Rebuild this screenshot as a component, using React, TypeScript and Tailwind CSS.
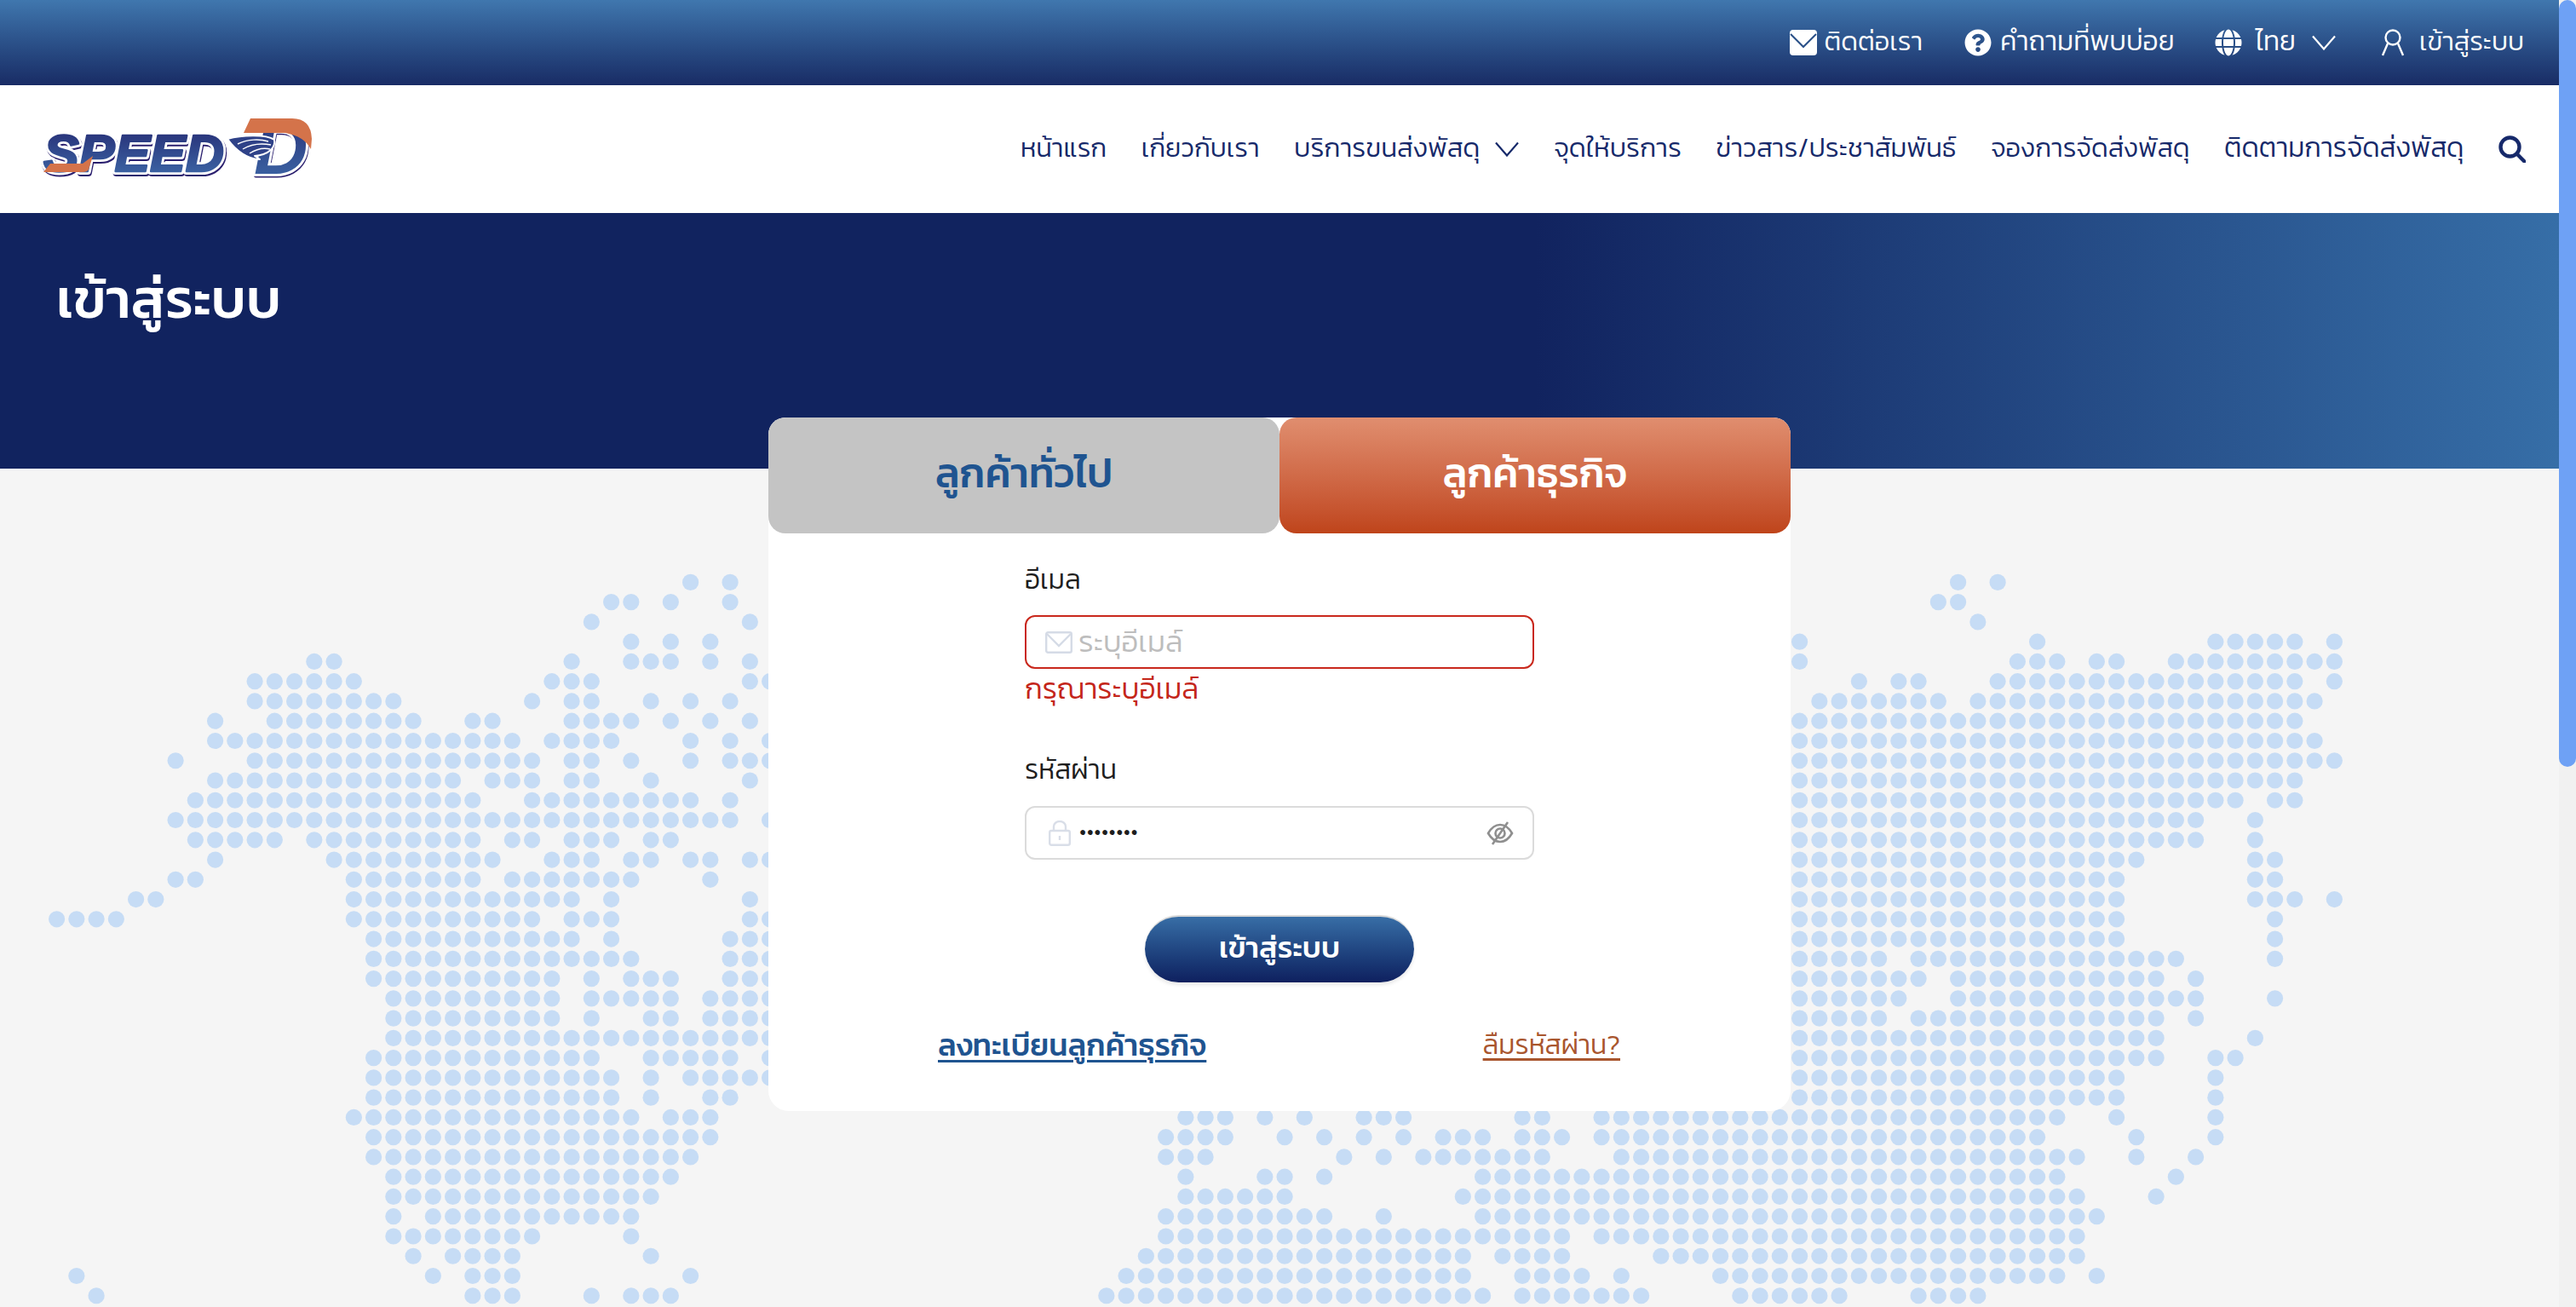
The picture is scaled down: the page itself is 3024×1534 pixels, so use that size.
import { FaGlobe, FaQuestionCircle } from "react-icons/fa";

const ROWS: string[] = [
  "32,34,96,98",
  "28-29,31,34,95-96",
  "27,35,97",
  "29,31,33,88,100,109-113,115",
  "13-14,26,29-31,33,35,88,99-101,103-104,107-115",
  "10-15,25-27,35-36,91,93-94,98-113,115",
  "10-17,24,26-27,30,32,34,89-95,97-114",
  "8,11-18,21-22,26-29,31,33,35,88-113",
  "8-23,25-28,32,34,36,88-114",
  "6,10-24,26-27,29,32,34-36,88-115",
  "8-20,22-24,26-27,30,35,88-113",
  "7-21,24-32,34,88-110,112-113",
  "6-34,36,88-108,111",
  "7-11,13-21,23-24,26-28,30-31,88-108,111",
  "8,14-22,25-27,29-30,32-33,35-36,88-105,111-112",
  "6-7,15-21,23-29,33,88-104,111-112",
  "4-5,15-26,28,35,88-104,111-113,115",
  "0-3,15-24,26-28,35-36,88-104,112",
  "16-26,28,34-36,88-104,112",
  "16-29,34-36,88-92,94-107,112",
  "16-25,27,29-31,34-36,88-94,96-106,108",
  "17-25,27-31,33-36,88-93,96-108,112",
  "17-25,27,30-31,33-36,88-92,94-106,108",
  "17-36,88-106,111",
  "16-27,30-34,36,88-106,109-110",
  "16-28,30,32-36,88-104,109",
  "16-28,30,33-34,88-104,109",
  "15-29,31-33,57-59,61,63,66-68,74-75,78-101,104,109",
  "16-33,56-59,62,64,66,68,70-72,74-76,78-100,105,109",
  "16-32,56-58,65,67,69-75,79-102,105,108",
  "17-31,57,61-62,64,72-101,107",
  "17-30,57-62,71-102,106",
  "17,19-29,56-64,67,72-103",
  "17-24,29,56-76,78-102",
  "18,20-23,30,55-71,73-76,81-102",
  "1,19,21-23,32,54-71,74-77,79,84-101,103",
  "2,21-23,27,29-31,53-72,74-80,85-90,94-97",
];

const DOTS = ROWS.flatMap((row, r) =>
  row.split(",").flatMap((part) => {
    const [a, b] = part.split("-").map(Number);
    const end = b ?? a;
    const out: [number, number][] = [];
    for (let c = a; c <= end; c++) out.push([66.6 + 23.25 * c, 683.4 + 23.26 * r]);
    return out;
  })
);

function Chevron({ className }: { className: string }) {
  return (
    <svg viewBox="0 0 28 18" className={className} fill="none" stroke="currentColor" strokeWidth="2.2">
      <path d="M1 1.5 14 16.5 27 1.5" />
    </svg>
  );
}

function Logo() {
  return (
    <svg viewBox="0 0 324 72" className="h-[72px] w-[324px] overflow-visible">
      <defs>
        <linearGradient id="lg" x1="0" y1="0" x2="0" y2="1">
          <stop offset="0" stopColor="#252a72" />
          <stop offset="1" stopColor="#3f6cab" />
        </linearGradient>
      </defs>
      <g fontFamily="'Liberation Sans', sans-serif" fontWeight="700" fontStyle="italic">
        <text x="5" y="64" fontSize="62" textLength="212" lengthAdjust="spacingAndGlyphs" fill="#2a1f6e" stroke="#2a1f6e" strokeWidth="8" strokeLinejoin="round">SPEED</text>
        <text x="4" y="62" fontSize="62" textLength="212" lengthAdjust="spacingAndGlyphs" fill="#fff" stroke="#fff" strokeWidth="8" strokeLinejoin="round">SPEED</text>
        <text x="4" y="62" fontSize="62" textLength="212" lengthAdjust="spacingAndGlyphs" fill="url(#lg)" stroke="url(#lg)" strokeWidth="2.4" strokeLinejoin="round">SPEED</text>
        <text x="252" y="67" fontSize="88" fill="#2a1f6e" stroke="#2a1f6e" strokeWidth="5" strokeLinejoin="round">D</text>
        <text x="251" y="65" fontSize="88" fill="url(#lg)" stroke="#fff" strokeWidth="6" strokeLinejoin="round" paintOrder="stroke">D</text>
      </g>
      <path d="M12 53H50L62 44 57 60Q55 63 50 63H4Z" fill="#d4734a" />
      <path d="M247 0H296Q318 0 319 24L318 36Q310 21 288 17H239Z" fill="#d4734a" />
      <path d="M220 24C236 20 264 18 275 25 277 34 268 43 252 44L258 48C244 48 230 38 220 24Z" fill="#2f4288" stroke="#fff" strokeWidth="2" strokeLinejoin="round" />
      <path d="M232 30C244 24 258 24 268 27M238 36C248 30 260 29 271 31M246 41C254 36 262 34 270 36" fill="none" stroke="#fff" strokeWidth="1.4" />
    </svg>
  );
}

export default function App() {
  return (
    <div className="flex h-[1534px] w-[3024px] overflow-hidden bg-[#f5f5f5] font-['Kanit','Noto_Sans_Thai',sans-serif] font-light">
      <main className="flex w-[3004px] flex-col">
        <div className="flex h-[100px] items-center justify-end bg-gradient-to-b from-[#4077ae] to-[#192c65] pr-[41px] text-[31.5px] text-white">
          <svg viewBox="0 0 32 30" className="h-[30px] w-[32px]">
            <rect width="32" height="30" rx="4" fill="#fff" />
            <path d="M1 5 16 20 31 5" fill="none" stroke="#2a5088" strokeWidth="2" />
          </svg>
          <span className="ml-[9px] -translate-y-[2px] text-[31px]">ติดต่อเรา</span>
          <FaQuestionCircle className="ml-[49px] h-[32px] w-[32px]" />
          <span className="ml-[10px] -translate-y-[2px] text-[32px]">คำถามที่พบบ่อย</span>
          <FaGlobe className="ml-[47px] h-[32px] w-[32px]" />
          <span className="ml-[16px] -translate-y-[2px] text-[32px]">ไทย</span>
          <Chevron className="ml-[19px] h-[18px] w-[28px]" />
          <svg viewBox="0 0 28 32" className="ml-[53px] h-[32px] w-[28px]" fill="none" stroke="currentColor" strokeWidth="2.4">
            <circle cx="14" cy="10" r="8.5" />
            <path d="M8 17 2 31M20 17l6 14" />
          </svg>
          <span className="ml-[17px] -translate-y-[2px] text-[31px]">เข้าสู่ระบบ</span>
        </div>

        <nav className="flex h-[150px] items-center justify-between bg-white pl-[47px] pr-[39px] text-[31.5px] text-[#16296a]">
          <Logo />
          <div className="flex items-center gap-[40.5px]">
            <span className="-translate-y-[2px] text-[31px]">หน้าแรก</span>
            <span className="-translate-y-[2px] text-[31px]">เกี่ยวกับเรา</span>
            <span className="flex items-center gap-[18px]">
              <span className="-translate-y-[2px]">บริการขนส่งพัสดุ</span>
              <Chevron className="h-[18px] w-[28px]" />
            </span>
            <span className="-translate-y-[2px]">จุดให้บริการ</span>
            <span className="-translate-y-[2px]">ข่าวสาร/ประชาสัมพันธ์</span>
            <span className="-translate-y-[2px] text-[31px]">จองการจัดส่งพัสดุ</span>
            <span className="-translate-y-[2px] text-[32px]">ติดตามการจัดส่งพัสดุ</span>
            <svg viewBox="0 0 32 32" className="h-[32px] w-[32px]" fill="none" stroke="currentColor" strokeWidth="4.4">
              <circle cx="13.5" cy="13.5" r="11" />
              <path d="m21.5 21.5 9 9" strokeLinecap="round" />
            </svg>
          </div>
        </nav>

        <section className="h-[300px] bg-[linear-gradient(90deg,#11235f_60%,#366ea7_100%)] pl-[66px] pt-[55px] text-[65px] font-medium leading-[90px] text-white">
          เข้าสู่ระบบ
        </section>

        <section className="relative flex-1">
          <svg viewBox="0 550 3004 984" className="absolute left-0 top-0 h-[984px] w-[3004px]" fill="#c6dcf5">
            {DOTS.map(([x, y]) => (
              <circle key={`${x}-${y}`} cx={x} cy={y} r="9.6" />
            ))}
          </svg>

          <div className="relative mx-auto -mt-[60px] w-[1200px] rounded-b-[24px] rounded-t-[20px] bg-white">
            <div className="grid h-[136px] grid-cols-2 text-[48px] font-medium">
              <div className="flex items-center justify-center rounded-[20px] bg-[#c4c4c4] pb-[6px] text-[#1f5490]">ลูกค้าทั่วไป</div>
              <div className="flex items-center justify-center rounded-[20px] bg-gradient-to-b from-[#e08e6f] to-[#bf441a] pb-[6px] text-white">ลูกค้าธุรกิจ</div>
            </div>

            <div className="mx-auto w-[598px] pt-[34px] text-[32px] leading-[40px] text-[#1e1e1e]">
              <div>อีเมล</div>
              <div className="mt-[22px] flex h-[63px] items-center rounded-[12px] border-2 border-[#c9281c] bg-white pl-[22px]">
                <svg viewBox="0 0 32 26" className="h-[26px] w-[32px]" fill="none" stroke="#d5dbe6" strokeWidth="2.4">
                  <rect x="1.2" y="1.2" width="29.6" height="23.6" rx="2" />
                  <path d="m2 3 14 14L30 3" />
                </svg>
                <span className="ml-[7px] -translate-y-[1px] text-[35px] text-[#bdbdbd]">ระบุอีเมล์</span>
              </div>
              <div className="mt-[3px] text-[34px] text-[#c4261a]">กรุณาระบุอีเมล์</div>
              <div className="mt-[55px]">รหัสผ่าน</div>
              <div className="mt-[23px] flex h-[63px] items-center rounded-[12px] border-2 border-[#dbdbdb] bg-white pl-[26px] pr-[22px]">
                <svg viewBox="0 0 26 30" className="h-[30px] w-[26px]" fill="none" stroke="#d9dee8" strokeWidth="2.4">
                  <rect x="1.2" y="12" width="23.6" height="16.8" rx="2" />
                  <path d="M6 12V7a7 6 0 0 1 14 0v5M13 18v5" />
                </svg>
                <span className="ml-[10px] flex-1 -translate-y-[2px] text-[24px] leading-[24px] tracking-[0.5px] text-[#1e1e1e]">••••••••</span>
                <svg viewBox="0 0 32 30" className="h-[30px] w-[32px]" fill="none" stroke="#8f8f8f" strokeWidth="2.6">
                  <path d="M2 15C6 8 11 5 16 5s10 3 14 10c-4 7-9 10-14 10S6 22 2 15Z" />
                  <circle cx="16" cy="15" r="5.5" />
                  <path d="M25 2 7 28" />
                </svg>
              </div>
            </div>

            <button className="mx-auto mt-[65px] flex h-[79px] w-[316px] items-center justify-center rounded-[40px] border-t-2 border-[#d8d8d8] bg-gradient-to-b from-[#386ea6] to-[#0f205f] pb-[4px] text-[35px] font-medium text-white shadow-[0_3px_4px_#e8e8e8]">
              เข้าสู่ระบบ
            </button>

            <div className="mt-[51px] flex items-center justify-between pb-[56px] pl-[199px] pr-[200px] leading-[44px]">
              <span className="text-[36px] font-medium text-[#1f5490] underline decoration-[3px] underline-offset-[5px]">ลงทะเบียนลูกค้าธุรกิจ</span>
              <span className="text-[32px] text-[#a9562e] underline decoration-[3px] underline-offset-[5px]">ลืมรหัสผ่าน?</span>
            </div>
          </div>
        </section>
      </main>

      <div className="w-[20px] bg-[#f1f1f1]">
        <div className="h-[900px] rounded-[10px] bg-[#6ea1f5]" />
      </div>
    </div>
  );
}
